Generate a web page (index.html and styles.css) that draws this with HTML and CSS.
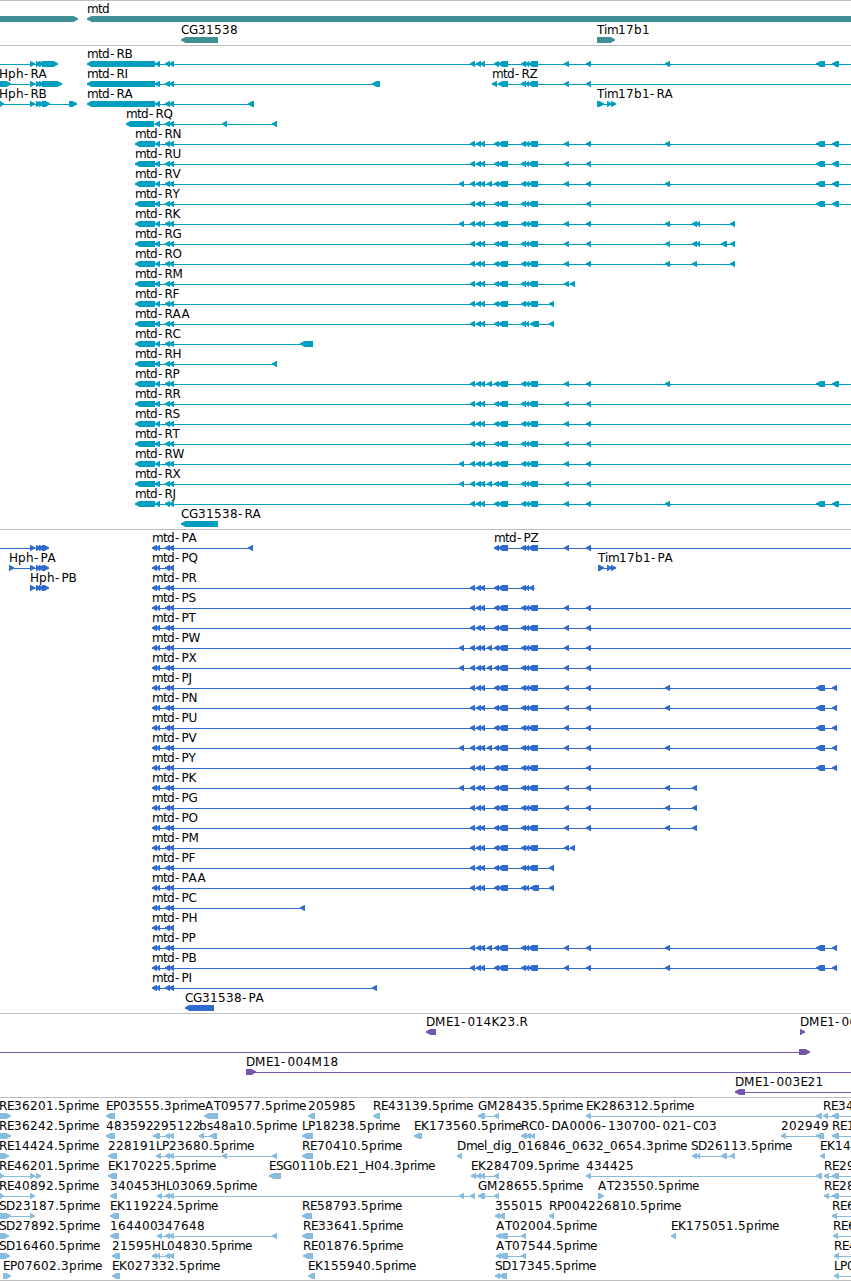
FILE: index.html
```html
<!DOCTYPE html>
<html lang="en">
<head>
    <meta charset="UTF-8">
    <title>Genome browser - mtd</title>
    <link rel="stylesheet" href="styles.css">
</head>
<body>
    <main class="browser">
        <section class="track genes" id="genes"></section>
        <section class="track transcripts" id="transcripts"></section>
        <section class="track proteins" id="proteins"></section>
        <section class="track clones" id="clones"></section>
        <section class="track ests" id="ests"></section>
    </main>
    <script src="script.js"></script>
</body>
</html>
```
FILE: styles.css
```css
body {
    margin: 0;
    background: #fff;
    font-family: "DejaVu Sans", sans-serif;
    font-size: 12px;
}

.browser {
    width: 851px;
    overflow: hidden;
    border-bottom: 1px solid #bebebe;
}

.track {
    display: flex;
    flex-direction: column;
    border-top: 1px solid #bebebe;
    padding-bottom: 3px;
}

.row {
    display: block;
    width: 851px;
    height: 20px;
    overflow: visible;
}

.row text {
    fill: #000;
}

.row rect {
    shape-rendering: crispEdges;
}

.genes {
    color: #408f95;
    padding-bottom: 2px;
}

.genes .row {
    height: 21px;
}

.transcripts {
    color: #009fc0;
}

.proteins {
    color: #2f6ace;
}

.clones {
    color: #7556a8;
}

.ests {
    color: #88bcdf;
    padding-bottom: 2px;
}
```
FILE: script.js
```js
const SVG = 'http://www.w3.org/2000/svg';
const EDGE = 851;

// label glyph advances in pixels, digits are 8
const ADVANCE = {
    A: 9, B: 7, C: 8, D: 9, E: 7, F: 7, G: 9, H: 9, I: 4, J: 4, K: 8, L: 6, M: 11,
    N: 9, O: 10, P: 7, Q: 10, R: 8, S: 7, T: 7, U: 9, V: 8, W: 12, X: 8, Y: 8, Z: 8,
    a: 7, b: 8, d: 8, e: 7, g: 8, h: 8, i: 3, l: 3, m: 11, p: 8, r: 4, s: 6, t: 4,
    '.': 4, '-': 6.5, '_': 6
};

// exon groups shared by the mtd isoforms
const A = '155-160 165-170 169-174 ';
const PA = '152-157 156-160 165-170 169-174 ';
const B = '470-475 476-481 480-485 ';
const B1 = '459-464 ' + B;
const X = '487-492 ';
const C = '494-499 498-508 ';
const D = '521-526 525-529 528-538 ';
const D2 = '521-526 525-529 530-539 ';
const E = '564-569 ';
const F = '586-591 ';
const G = '665-670 ';
const H = '816-825 ';
const I = '832-839 ';
const I2 = '832-837 ';
const UTR = '87-155 ' + A;
const N = '135-155 ' + A;
const S = '165-170 169-174 ';
const HPH = '30-35 36-41 39-44 ';

// feature: [label, label x, strand, exons, line end, line start]
const tracks = {
    genes: [
        [['', 0, '>', '0-78'], ['mtd', 87, '<', '87-860']],
        [['CG31538', 181, '<', '181-218'], ['Tim17b1', 597, '>', '597-615']]
    ],
    transcripts: [
        [['', 0, '>', HPH + '42-58', 58, 0], ['mtd-RB', 87, '<', UTR + B + C + D + E + F + G + H + I, EDGE]],
        [['Hph-RA', -1, '>', '0-11 ' + HPH + '42-62'], ['mtd-RI', 87, '<', UTR + '372-380'],
            ['mtd-RZ', 492, '<', '492-497 498-508 ' + D + E + F, EDGE]],
        [['Hph-RB', -1, '>', '0-4 ' + HPH + '42-50 69-77'], ['mtd-RA', 87, '<', UTR + '248-254'],
            ['Tim17b1-RA', 597, '>', '597-604 607-612 611-616']],
        [['mtd-RQ', 126, '<', '126-154 ' + A + '222-227 272-277']],
        [['mtd-RN', 135, '<', N + B + C + D + E + F + G + H + I, EDGE]],
        [['mtd-RU', 135, '<', N + B + C + D + E + F + H + I, EDGE]],
        [['mtd-RV', 135, '<', N + B1 + X + C + D + E + F + G + H + I, EDGE]],
        [['mtd-RY', 135, '<', N + B + C + D + F + H + I, EDGE]],
        [['mtd-RK', 135, '<', N + B1 + C + D + E + F + G + '692-697 696-700 730-735']],
        [['mtd-RG', 135, '<', N + B + C + D + E + F + G + '692-697 696-700 721-727 730-735']],
        [['mtd-RO', 135, '<', N + B + C + D + E + F + G + '692-697 730-735']],
        [['mtd-RM', 135, '<', N + B + C + D + E + '570-575']],
        [['mtd-RF', 135, '<', N + B + C + D + '549-554']],
        [['mtd-RAA', 135, '<', N + B + C + D2 + '549-554']],
        [['mtd-RC', 135, '<', N + '300-313']],
        [['mtd-RH', 135, '<', N + '272-277']],
        [['mtd-RP', 135, '<', N + B + X + C + D + E + F + G + H + I, EDGE]],
        [['mtd-RR', 135, '<', N + B + C + D + E + F, EDGE]],
        [['mtd-RS', 135, '<', N + B + C + D + E + F, EDGE]],
        [['mtd-RT', 135, '<', N + B + C + D + E + F, EDGE]],
        [['mtd-RW', 135, '<', N + B1 + X + C + D + E + F, EDGE]],
        [['mtd-RX', 135, '<', N + B1 + X + C + D + E + F, EDGE]],
        [['mtd-RJ', 135, '<', N + B + C + D + E + F + G + H + I, EDGE]],
        [['CG31538-RA', 181, '<', '181-218']]
    ],
    proteins: [
        [['', 0, '>', HPH + '42-49', 49, 0], ['mtd-PA', 152, '<', PA + '248-253'],
            ['mtd-PZ', 494, '<', C + D + E + F, EDGE]],
        [['Hph-PA', 9, '>', '9-14 ' + HPH + '42-49'], ['mtd-PQ', 152, '<', PA],
            ['Tim17b1-PA', 598, '>', '598-604 607-612 611-616']],
        [['Hph-PB', 30, '>', HPH + '42-49'], ['mtd-PR', 152, '<', PA + B + C + '521-526 525-529 529-534', 535]],
        [['mtd-PS', 152, '<', PA + B + C + D + E + F, EDGE]],
        [['mtd-PT', 152, '<', PA + B + C + D + E + F, EDGE]],
        [['mtd-PW', 152, '<', PA + B1 + X + C + D + E + F, EDGE]],
        [['mtd-PX', 152, '<', PA + B1 + X + C + D + E + F, EDGE]],
        [['mtd-PJ', 152, '<', PA + B + C + D + E + F + G + H + I2]],
        [['mtd-PN', 152, '<', PA + B + C + D + E + F + G + H + I2]],
        [['mtd-PU', 152, '<', PA + B + C + D + E + F + H + I2]],
        [['mtd-PV', 152, '<', PA + B1 + X + C + D + E + F + G + H + I2]],
        [['mtd-PY', 152, '<', PA + B + C + D + F + H + I2]],
        [['mtd-PK', 152, '<', PA + B1 + C + D + E + F + G + '692-697']],
        [['mtd-PG', 152, '<', PA + B + C + D + E + F + G + '692-697']],
        [['mtd-PO', 152, '<', PA + B + C + D + E + F + G + '692-697']],
        [['mtd-PM', 152, '<', PA + B + C + D + E + '570-575']],
        [['mtd-PF', 152, '<', PA + B + C + D + '549-554']],
        [['mtd-PAA', 152, '<', PA + B + C + D2 + '549-554']],
        [['mtd-PC', 152, '<', PA + '300-305']],
        [['mtd-PH', 152, '<', PA]],
        [['mtd-PP', 152, '<', PA + B + X + C + D + E + F + G + H + I2]],
        [['mtd-PB', 152, '<', PA + B + C + D + E + F + G + H + I2]],
        [['mtd-PI', 152, '<', PA + '372-377']],
        [['CG31538-PA', 185, '<', '185-214']]
    ],
    clones: [
        [['DME1-014K23.R', 426, '<', '426-436'], ['DME1-00', 800, '>', '800-805']],
        [['', 0, '>', '799-810', 810, 0]],
        [['DME1-004M18', 246, '>', '246-256', EDGE]],
        [['DME1-003E21', 735, '<', '735-745', EDGE]]
    ],
    ests: [
        [['RE36201.5prime', -1, '>', '0-11'], ['EP03555.3prime', 106, '<', '106-115'],
            ['AT09577.5prime', 205, '<', '204-218'], ['205985', 308, '<', '308-315'],
            ['RE43139.5prime', 373, '<', '373-380'], ['GM28435.5prime', 478, '<', '478-485 494-499'],
            ['EK286312.5prime', 586, '<', '586-591 816-822'], ['RE34', 823, '<', '823-828 ' + I, EDGE]],
        [['RE36242.5prime', -1, '>', '0-11'], ['483592', 106, '<', '106-115'],
            ['295122', 153, '<', '153-160 ' + S], ['bs48a10.5prime', 199, '<', '199-204 210-217'],
            ['LP18238.5prime', 302, '<', '302-313'], ['EK173560.5prime', 414, '<', '414-422'],
            ['RC0-DA0006-130700-021-C03', 521, '<', '521-527 526-531 530-535'],
            ['202949', 781, '<', '781-786 816-824'], ['RE1', 832, '<', I, EDGE]],
        [['RE14424.5prime', -1, '>', '0-9'], ['228191', 108, '<', '108-117'],
            ['LP23680.5prime', 156, '<', '156-161 ' + S + '222-227 272-277'],
            ['RE70410.5prime', 302, '<', '302-313'],
            ['Dmel_dig_016846_0632_0654.3prime', 457, '<', '457-462'],
            ['SD26113.5prime', 691, '<', '692-697 696-700 721-727 730-735'], ['EK14', 820, '<', '820-825']],
        [['RE46201.5prime', -1, '>', '0-4 30-35 36-41'], ['EK170225.5prime', 108, '<', '108-117'],
            ['ESG0110b.E21_H04.3prime', 269, '<', '269-281'],
            ['EK284709.5prime', 471, '<', '471-476 476-481 480-485 494-499'],
            ['434425', 586, '<', '586-591 816-822'], ['RE29', 824, '<', '824-829 ' + I, EDGE]],
        [['RE40892.5prime', -1, '>', '0-4 30-35'], ['340453', 110, '<', '110-117'],
            ['HL03069.5prime', 157, '<', '157-162 ' + S + '459-464 470-475'],
            ['GM28655.5prime', 478, '<', '478-485 494-499'], ['AT23550.5prime', 598, '>', '598-604'],
            ['RE28', 824, '<', '824-829 ' + I, EDGE]],
        [['SD23187.5prime', -1, '>', '0-11 30-35'], ['EK119224.5prime', 110, '<', '110-119'],
            ['RE58793.5prime', 302, '<', '302-312'], ['355015', 495, '<', '495-500 499-505'],
            ['RP004226810.5prime', 549, '<', '549-554'], ['RE6', 832, '<', '832-837', EDGE]],
        [['SD27892.5prime', -1, '>', '0-9'], ['164400', 110, '<', '110-119'],
            ['347648', 157, '<', '157-162 ' + S + '272-277'], ['RE33641.5prime', 303, '<', '302-313'],
            ['AT02004.5prime', 496, '<', '496-501 499-508 521-526'],
            ['EK175051.5prime', 671, '<', '671-676'], ['RE6', 833, '<', '833-838', EDGE]],
        [['SD16460.5prime', -1, '>', '0-10'], ['21595', 112, '<', '112-120'],
            ['HL04830.5prime', 152, '<', PA], ['RE01876.5prime', 303, '<', '303-313'],
            ['AT07544.5prime', 496, '<', '496-501 499-508 521-526'], ['RE4', 834, '<', '834-839', EDGE]],
        [['EP07602.3prime', 3, '>', '3-11'], ['EK027332.5prime', 112, '<', '112-120'],
            ['EK155940.5prime', 308, '<', '308-315'], ['SD17345.5prime', 495, '<', '495-500 499-507'],
            ['LP0', 834, '<', '834-839', EDGE]]
    ]
};

function add(parent, name, attrs) {
    const el = document.createElementNS(SVG, name);
    for (const key in attrs) {
        el.setAttribute(key, attrs[key]);
    }
    parent.appendChild(el);
    return el;
}

function drawLabel(row, label, x) {
    const xs = [];
    for (const ch of label) {
        xs.push(x);
        x += ADVANCE[ch] || 8;
    }
    add(row, 'text', { x: xs.join(' '), y: 12 }).textContent = label;
}

// bar with a rounded-off arrow head on its 3' side
function drawExon(row, start, end, strand) {
    const head = Math.min(5, end - start) - 0.6;
    const tip = strand === '<' ? start : end;
    const tail = strand === '<' ? end : start;
    const dir = strand === '<' ? 1 : -1;
    const points = [
        [tip, 17.2],
        [tip + dir * 2, 16.2],
        [tip + dir * head, 15],
        [tail, 15],
        [tail, 21],
        [tip + dir * head, 21],
        [tip + dir * 2, 19.4],
        [tip, 18.8]
    ];
    add(row, 'polygon', { points: points.join(' '), fill: 'currentColor' });
}

function drawFeature(row, [label, x, strand, exonList, lineEnd, lineStart]) {
    const exons = exonList.trim().split(' ').map(e => e.split('-').map(Number));
    const from = lineStart === undefined ? exons[0][0] : lineStart;
    const to = lineEnd || exons[exons.length - 1][1];
    if (exons.length > 1 || lineEnd) {
        add(row, 'rect', { x: from, y: 18, width: to - from, height: 1, fill: 'currentColor' });
    }
    exons.forEach(([start, end]) => drawExon(row, start, end, strand));
    if (label) {
        drawLabel(row, label, x);
    }
}

for (const id in tracks) {
    const track = document.getElementById(id);
    tracks[id].forEach(features => {
        const row = add(track, 'svg', { class: 'row' });
        features.forEach(feature => drawFeature(row, feature));
    });
}
```
